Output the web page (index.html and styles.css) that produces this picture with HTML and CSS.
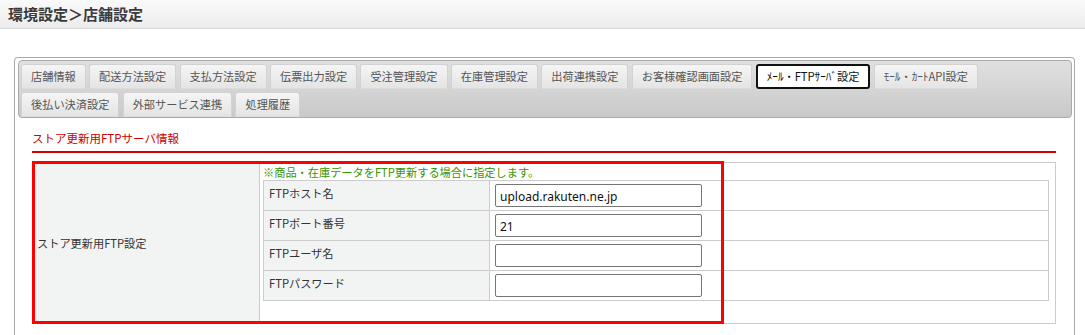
FILE: index.html
```html
<!DOCTYPE html>
<html lang="ja">
<head>
<meta charset="utf-8">
<title>店舗設定</title>
<link rel="stylesheet" href="styles.css">
</head>
<body>
<div class="header"><h1 class="page-title">環境設定＞店舗設定</h1></div>
<div class="frame">
  <div class="tabbar">
    <span class="tab">店舗情報</span>
    <span class="tab">配送方法設定</span>
    <span class="tab">支払方法設定</span>
    <span class="tab">伝票出力設定</span>
    <span class="tab">受注管理設定</span>
    <span class="tab">在庫管理設定</span>
    <span class="tab">出荷連携設定</span>
    <span class="tab">お客様確認画面設定</span>
    <span class="tab active">ﾒｰﾙ・FTPｻｰﾊﾞ設定</span>
    <span class="tab">ﾓｰﾙ・ｶｰﾄAPI設定</span>
    <span class="tab">後払い決済設定</span>
    <span class="tab">外部サービス連携</span>
    <span class="tab">処理履歴</span>
  </div>
  <div class="section">
    <h2 class="sec-title">ストア更新用FTPサーバ情報</h2>
    <div class="settings">
      <table class="outer">
        <tr>
          <th class="outer-label">ストア更新用FTP設定</th>
          <td class="outer-body">
            <div class="note">※商品・在庫データをFTP更新する場合に指定します。</div>
            <table class="inner">
              <tr><th>FTPホスト名</th><td><input class="field" type="text" value="upload.rakuten.ne.jp"></td></tr>
              <tr><th>FTPポート番号</th><td><input class="field" type="text" value="21"></td></tr>
              <tr><th>FTPユーザ名</th><td><input class="field" type="text" value=""></td></tr>
              <tr><th>FTPパスワード</th><td><input class="field" type="password" value=""></td></tr>
            </table>
          </td>
        </tr>
      </table>
      <div class="highlight"></div>
    </div>
  </div>
</div>
</body>
</html>
```

FILE: styles.css
```css
html, body {
  margin: 0;
  padding: 0;
  background: #fff;
}
body {
  font-family: "Noto Sans CJK JP", "Noto Sans", sans-serif;
  font-size: 11.2px;
  color: #333;
  width: 1085px;
  height: 335px;
  overflow: hidden;
}
.header {
  height: 28px;
  border-bottom: 1px solid #d8d8d8;
  background: linear-gradient(#fafafa, #ececec);
  display: flex;
  align-items: center;
  padding-left: 8px;
}
.page-title {
  margin: 0;
  font-size: 15px;
  font-weight: bold;
  color: #3a3a3a;
  line-height: 1;
  position: relative;
  top: -1px;
}
.frame {
  margin: 28px 10px 0 14px;
  border: 1px solid #aaa;
  border-bottom: none;
  border-radius: 4px 4px 0 0;
  padding: 2px 2px 0 3px;
  height: 276px;
  overflow: hidden;
}
.tabbar {
  border: 1px solid #aaa;
  border-radius: 4px;
  background: linear-gradient(#e0e0e0, #c9c9c9);
  padding: 3px 2px 0 2px;
  display: flex;
  flex-wrap: wrap;
  gap: 3px 3.3px;
}
.tab {
  display: flex;
  align-items: center;
  height: 23px;
  padding: 0 9px;
  border: 1px solid #d2d2d2;
  border-bottom-color: #dcdcdc;
  border-radius: 3px 3px 0 0;
  background: linear-gradient(#f5f5f5, #e4e4e4);
  color: #555;
  white-space: nowrap;
  line-height: 1;
}
.tab.active {
  background: #fff;
  border: 2px solid #111;
  border-radius: 3px;
  height: 21px;
  padding: 0 9px;
  color: #111;
}
.section {
  margin: 0 16px 0 14px;
}
.sec-title {
  margin: 0;
  padding-top: 13px;
  height: 20px;
  line-height: 14px;
  font-size: 11.5px;
  font-weight: normal;
  color: #c00;
  border-bottom: 2px solid #d40000;
}
.settings {
  position: relative;
  margin-top: 9px;
}
.outer {
  width: 100%;
  border-collapse: collapse;
  border: 1px solid #ccc;
}
.outer-label {
  width: 222px;
  background: #f2f4f4;
  border-right: 1px solid #ccc;
  text-align: left;
  font-weight: normal;
  padding: 0 0 0 4px;
  vertical-align: middle;
  color: #333;
}
.outer-body {
  padding: 0 6px 22px 3px;
  vertical-align: top;
}
.note {
  color: #3a9400;
  height: 17px;
  line-height: 18px;
}
.inner {
  width: 100%;
  border-collapse: collapse;
  border: 1px solid #ccc;
}
.inner tr {
  height: 30px;
}
.inner th {
  width: 220px;
  background: #f2f4f4;
  border: 1px solid #ccc;
  text-align: left;
  font-weight: normal;
  padding: 0 0 6px 5px;
  color: #333;
  vertical-align: middle;
}
.inner td {
  border: 1px solid #ccc;
  padding: 0 0 0 5px;
  vertical-align: middle;
}
.field {
  display: block;
  box-sizing: border-box;
  width: 207px;
  height: 23px;
  border: 1px solid #767676;
  border-radius: 2px;
  padding: 1px 4px 0;
  font-family: "Noto Sans", "Noto Sans CJK JP", sans-serif;
  font-size: 12px;
  color: #111;
  background: #fff;
}
.highlight {
  position: absolute;
  left: 0;
  top: -1px;
  width: 692px;
  height: 163px;
  box-sizing: border-box;
  border: 3px solid #f00;
  pointer-events: none;
}
```
